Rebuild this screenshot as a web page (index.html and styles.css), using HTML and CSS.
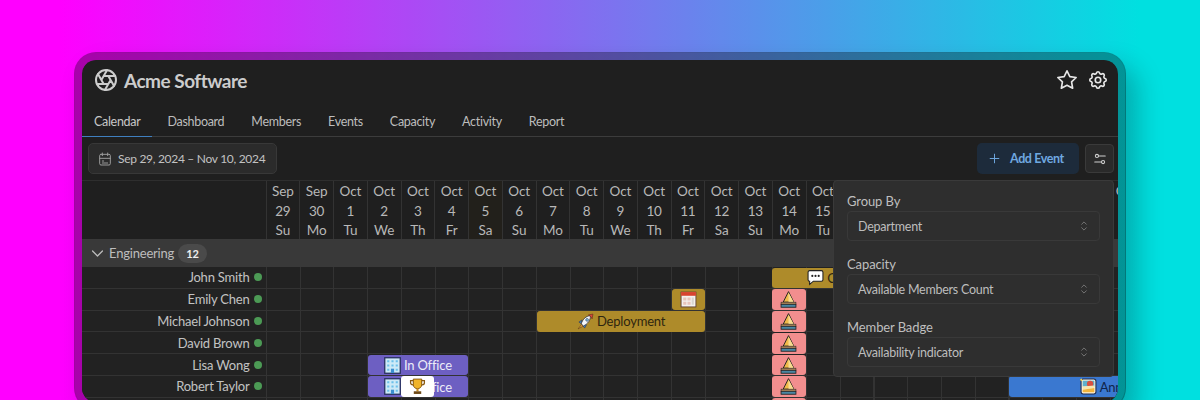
FILE: index.html
```html
<!DOCTYPE html>
<html lang="en">
<head>
<meta charset="utf-8">
<title>Acme Software</title>
<link rel="stylesheet" href="styles.css">
</head>
<body>
<svg class="defs" width="0" height="0" aria-hidden="true">
  <symbol id="e-office" viewBox="0 0 16 16">
    <rect x="0.7" y="0.7" width="14.6" height="14.6" fill="#cdeaf7" stroke="#27305f" stroke-width="1.2"/>
    <path d="M3 3h2v2H3zM7 3h2v2H7zM11 3h2v2h-2zM3 7h2v2H3zM7 7h2v2H7zM11 7h2v2h-2zM3 11h2v2H3zM11 11h2v2h-2z" fill="#6cc0ea"/>
    <rect x="6.5" y="11" width="3" height="4" fill="#3a8fd0"/>
  </symbol>
  <symbol id="e-trophy" viewBox="0 0 16 16">
    <path d="M1.5 2.5h3v4H3.5A2 2 0 0 1 1.5 4.500zM14.500 2.500h-3v4h1a2 2 0 0 0 2-2z" fill="none" stroke="#8a5a12" stroke-width="1.200"/>
    <path d="M4 1h8v5c0 2.600-1.800 4-4 4s-4-1.400-4-4z" fill="#f0b429" stroke="#7a4f10" stroke-width=".8"/>
    <rect x="7" y="10" width="2" height="2.500" fill="#c98a1c"/>
    <rect x="4.500" y="12.500" width="7" height="2.500" fill="#6e4a18"/>
  </symbol>
  <symbol id="e-rocket" viewBox="0 0 16 16">
    <path d="M4.500 10.500L1 15l5-2.800z" fill="#e8a23a" stroke="#5a3418" stroke-width=".5"/>
    <path d="M4.800 6.500L1.800 8.500l2.400 1.800zM9 11l-1.800 3.200L5.500 11.500z" fill="#3f86c8" stroke="#24324f" stroke-width=".5"/>
    <path d="M4 10.200C5.200 6 8.500 2.800 12.500 2.500c.6 4.300-2.400 7.600-6.400 9.700z" fill="#f4f7fa" stroke="#2a2a33" stroke-width=".7"/>
    <path d="M10.800 1.800L15 1l-.8 4.500c-.5-1.600-1.700-2.900-3.400-3.700z" fill="#d9493a" stroke="#5a2018" stroke-width=".5"/>
    <circle cx="9.500" cy="6.500" r="1.300" fill="#7fc4ee" stroke="#2a2a33" stroke-width=".5"/>
  </symbol>
  <symbol id="e-calendar" viewBox="0 0 16 16">
    <rect x="1" y="1" width="14" height="14" fill="#f4f1ee" stroke="#5a3a34" stroke-width=".8"/>
    <rect x="1" y="1" width="14" height="3.500" fill="#d8432f"/>
    <path d="M3 6h3v3H3zM7 6h3v3H7zM3 10h3v3H3zM7 10h3v3H7z" fill="#e8c4bb"/>
    <path d="M11 6h2v7h-2z" fill="#d9d4cf"/>
  </symbol>
  <symbol id="e-speech" viewBox="0 0 16 16">
    <path d="M2.500 1.500h11a1.500 1.500 0 0 1 1.500 1.500v7a1.500 1.500 0 0 1-1.500 1.500H6L2.500 14.500v-3A1.500 1.500 0 0 1 1 10V3a1.500 1.500 0 0 1 1.500-1.500z" fill="#fff" stroke="#222" stroke-width="1"/>
    <circle cx="5" cy="6.500" r="1" fill="#222"/><circle cx="8" cy="6.500" r="1" fill="#222"/><circle cx="11" cy="6.500" r="1" fill="#222"/>
  </symbol>
  <symbol id="e-sail" viewBox="0 0 16 16">
    <path d="M8 .6L13 10.500H3z" fill="#f0bb4a" stroke="#222" stroke-width=".9" stroke-linejoin="round"/>
    <path d="M8 1.500V10.500H13z" fill="#f8dc90"/>
    <rect x="1" y="10.500" width="14" height="2" fill="#b58a5c" stroke="#222" stroke-width=".5"/>
    <rect x="1" y="12.500" width="14" height="2.800" fill="#4a87a3" stroke="#222" stroke-width=".8"/>
  </symbol>
  <symbol id="e-sunset" viewBox="0 0 16 16">
    <rect x="1" y="1" width="14" height="14" rx="2" fill="#fbf3e0" stroke="#1f2a4a" stroke-width="1"/>
    <rect x="2.500" y="2.500" width="11" height="5.500" fill="#5fb0cc"/>
    <circle cx="9.500" cy="5.500" r="3" fill="#d9503f"/>
    <path d="M2.500 8l11-1v2.500l-11 1.500z" fill="#f8e6b0"/>
    <path d="M2.500 11l11-1.500v4h-11z" fill="#f2b53c"/>
    <path d="M0 1.500l1.500-1 1 1.500-1.500 1z" fill="#f2d24e"/>
  </symbol>
</svg>

<main class="window">
  <header class="topbar">
    <div class="brand">
      <svg class="logo" viewBox="0 0 24 24" fill="none" stroke="currentColor" stroke-width="2" stroke-linecap="round" stroke-linejoin="round"><circle cx="12" cy="12" r="10"/><path d="m14.310 8 5.740 9.940M9.690 8h11.480M7.380 12l5.740-9.940M9.690 16 3.950 6.060M14.310 16H2.830M16.620 12l-5.740 9.940"/></svg>
      <h1 class="title">Acme Software</h1>
    </div>
    <div class="top-actions">
      <svg class="icon-lg" viewBox="0 0 24 24" fill="none" stroke="currentColor" stroke-width="1.800" stroke-linejoin="round"><path d="M12 17.750l-6.172 3.245l1.179-6.873l-5-4.867l6.900-1l3.086-6.253l3.086 6.253l6.900 1l-5 4.867l1.179 6.873z"/></svg>
      <svg class="icon-lg" viewBox="0 0 24 24" fill="none" stroke="currentColor" stroke-width="1.800" stroke-linejoin="round"><path d="M10.325 4.317c.426-1.756 2.924-1.756 3.350 0a1.724 1.724 0 0 0 2.573 1.066c1.543-.94 3.310.826 2.370 2.370a1.724 1.724 0 0 0 1.065 2.572c1.756.426 1.756 2.924 0 3.350a1.724 1.724 0 0 0-1.066 2.573c.94 1.543-.826 3.310-2.370 2.370a1.724 1.724 0 0 0-2.572 1.065c-.426 1.756-2.924 1.756-3.350 0a1.724 1.724 0 0 0-2.573-1.066c-1.543.94-3.310-.826-2.370-2.370a1.724 1.724 0 0 0-1.065-2.572c-1.756-.426-1.756-2.924 0-3.350a1.724 1.724 0 0 0 1.066-2.573c-.94-1.543.826-3.310 2.370-2.370c1 .608 2.296.07 2.572-1.065z"/><circle cx="12" cy="12" r="3"/></svg>
    </div>
  </header>

  <nav class="tabs">
    <a class="tab active">Calendar</a>
    <a class="tab">Dashboard</a>
    <a class="tab">Members</a>
    <a class="tab">Events</a>
    <a class="tab">Capacity</a>
    <a class="tab">Activity</a>
    <a class="tab">Report</a>
  </nav>

  <div class="toolbar">
    <button class="date-btn">
      <svg class="icon-sm" viewBox="0 0 24 24" fill="none" stroke="currentColor" stroke-width="1.500" stroke-linecap="round" stroke-linejoin="round"><rect x="4" y="5" width="16" height="16" rx="2"/><path d="M16 3v4M8 3v4M4 11h16M8 15h2M8 18h8"/></svg>
      <span>Sep 29, 2024 – Nov 10, 2024</span>
    </button>
    <div class="tool-right">
      <button class="add-btn">
        <svg class="icon-plus" viewBox="0 0 24 24" fill="none" stroke="currentColor" stroke-width="1.800" stroke-linecap="round"><path d="M12 4v16M4 12h16"/></svg>
        <span>Add Event</span>
      </button>
      <button class="adj-btn">
        <svg class="icon-adj" viewBox="0 0 16 16" fill="none" stroke="currentColor" stroke-width="1.200" stroke-linecap="round"><circle cx="4.500" cy="4.500" r="1.800"/><path d="M6.300 4.500H14M2 11.500h7.700"/><circle cx="11.500" cy="11.500" r="1.800"/></svg>
      </button>
    </div>
  </div>

  <section class="timeline">
    <div class="corner"></div>
    <div class="day"><span>Sep</span><span>29</span><span>Su</span></div>
    <div class="day"><span>Sep</span><span>30</span><span>Mo</span></div>
    <div class="day"><span>Oct</span><span>1</span><span>Tu</span></div>
    <div class="day"><span>Oct</span><span>2</span><span>We</span></div>
    <div class="day"><span>Oct</span><span>3</span><span>Th</span></div>
    <div class="day"><span>Oct</span><span>4</span><span>Fr</span></div>
    <div class="day weekend"><span>Oct</span><span>5</span><span>Sa</span></div>
    <div class="day"><span>Oct</span><span>6</span><span>Su</span></div>
    <div class="day"><span>Oct</span><span>7</span><span>Mo</span></div>
    <div class="day"><span>Oct</span><span>8</span><span>Tu</span></div>
    <div class="day"><span>Oct</span><span>9</span><span>We</span></div>
    <div class="day"><span>Oct</span><span>10</span><span>Th</span></div>
    <div class="day"><span>Oct</span><span>11</span><span>Fr</span></div>
    <div class="day"><span>Oct</span><span>12</span><span>Sa</span></div>
    <div class="day"><span>Oct</span><span>13</span><span>Su</span></div>
    <div class="day"><span>Oct</span><span>14</span><span>Mo</span></div>
    <div class="day"><span>Oct</span><span>15</span><span>Tu</span></div>
    <div class="day"><span>Oct</span><span>16</span><span>We</span></div>
    <div class="day"><span>Oct</span><span>17</span><span>Th</span></div>
    <div class="day"><span>Oct</span><span>18</span><span>Fr</span></div>
    <div class="day"><span>Oct</span><span>19</span><span>Sa</span></div>
    <div class="day"><span>Oct</span><span>20</span><span>Su</span></div>
    <div class="day"><span>Oct</span><span>21</span><span>Mo</span></div>
    <div class="day"><span>Oct</span><span>22</span><span>Tu</span></div>
    <div class="day"><span>Oct</span><span>23</span><span>We</span></div>
    <div class="day"><span>Oct</span><span>24</span><span>Th</span></div>

    <div class="group">
      <svg class="chev" viewBox="0 0 24 24" fill="none" stroke="currentColor" stroke-width="1.800" stroke-linecap="round" stroke-linejoin="round"><path d="M5 8.500l7 7l7-7"/></svg>
      <span>Engineering</span>
      <span class="badge">12</span>
    </div>

    <div class="lines"></div>
    <div class="weekend-col"></div>

    <div class="name r1">John Smith<i class="dot"></i></div>
    <div class="name r2">Emily Chen<i class="dot"></i></div>
    <div class="name r3">Michael Johnson<i class="dot"></i></div>
    <div class="name r4">David Brown<i class="dot"></i></div>
    <div class="name r5">Lisa Wong<i class="dot"></i></div>
    <div class="name r6">Robert Taylor<i class="dot"></i></div>
    <div class="name r7">Sarah Davis<i class="dot"></i></div>

    <div class="ev gold meeting r1 c15 s6"><svg class="emoji"><use href="#e-speech"/></svg><span>Company Meeting</span></div>
    <div class="ev gold r2 c12 s1"><svg class="emoji"><use href="#e-calendar"/></svg></div>
    <div class="ev gold r3 c8 s5"><svg class="emoji"><use href="#e-rocket"/></svg><span>Deployment</span></div>
    <div class="ev pink r2 c15 s1"><svg class="emoji"><use href="#e-sail"/></svg></div>
    <div class="ev pink r3 c15 s1"><svg class="emoji"><use href="#e-sail"/></svg></div>
    <div class="ev pink r4 c15 s1"><svg class="emoji"><use href="#e-sail"/></svg></div>
    <div class="ev pink r5 c15 s1"><svg class="emoji"><use href="#e-sail"/></svg></div>
    <div class="ev pink r6 c15 s1"><svg class="emoji"><use href="#e-sail"/></svg></div>
    <div class="ev pink r7 c15 s1"><svg class="emoji"><use href="#e-sail"/></svg></div>
    <div class="ev violet r5 c3 s3"><svg class="emoji"><use href="#e-office"/></svg><span>In Office</span></div>
    <div class="ev violet r6 c3 s3"><svg class="emoji"><use href="#e-office"/></svg><span>In Office</span></div>
    <div class="ev white r6 c4 s1"><svg class="emoji"><use href="#e-trophy"/></svg></div>
    <div class="ev blue r6 c22 s7"><svg class="emoji"><use href="#e-sunset"/></svg><span>Annual Leave</span></div>
  </section>

  <aside class="panel">
    <div class="field">
      <label class="field-label">Group By</label>
      <div class="select"><span>Department</span><svg class="sel-ic" viewBox="0 0 24 24" fill="none" stroke="currentColor" stroke-width="1.500" stroke-linecap="round" stroke-linejoin="round"><path d="M8 9l4-4l4 4M16 15l-4 4l-4-4"/></svg></div>
    </div>
    <div class="field">
      <label class="field-label">Capacity</label>
      <div class="select"><span>Available Members Count</span><svg class="sel-ic" viewBox="0 0 24 24" fill="none" stroke="currentColor" stroke-width="1.500" stroke-linecap="round" stroke-linejoin="round"><path d="M8 9l4-4l4 4M16 15l-4 4l-4-4"/></svg></div>
    </div>
    <div class="field">
      <label class="field-label">Member Badge</label>
      <div class="select"><span>Availability indicator</span><svg class="sel-ic" viewBox="0 0 24 24" fill="none" stroke="currentColor" stroke-width="1.500" stroke-linecap="round" stroke-linejoin="round"><path d="M8 9l4-4l4 4M16 15l-4 4l-4-4"/></svg></div>
    </div>
  </aside>
</main>
</body>
</html>
```

FILE: styles.css
```css
* { box-sizing: border-box; }
html, body { margin: 0; height: 400px; overflow: hidden; }
body {
  background: linear-gradient(90deg, #ff00ff 5%, #00e0e0 95%);
  font-family: "Lato", "Liberation Sans", sans-serif;
  padding: 52px 74px 0;
}
.defs { position: absolute; }
.window {
  position: relative;
  width: 1052px;
  height: 358px;
  border: 8px solid rgba(0, 0, 0, .33);
  border-radius: 22px;
  background: #1f1f1f;
  background-clip: padding-box;
  box-shadow: 12px 14px 26px rgba(0, 0, 0, .22);
  overflow: hidden;
  color: #c9c9c9;
}
.topbar {
  height: 45px;
  display: flex;
  align-items: center;
  justify-content: space-between;
  padding: 0 9px 5px 12px;
}
.brand { display: flex; align-items: center; gap: 6px; color: #cccccc; }
.logo { width: 24px; height: 24px; }
.title { margin: 0; font-size: 19px; font-weight: 700; letter-spacing: -.5px; }
.top-actions { display: flex; gap: 9px; color: #e6e6e6; }
.icon-lg { width: 22px; height: 22px; }

.tabs {
  height: 32px;
  display: flex;
  gap: 3px;
  border-bottom: 1px solid #3c3c3c;
  font-size: 12.5px;
  letter-spacing: -.3px;
}
.tab {
  padding: 2px 12px 0;
  display: flex;
  align-items: center;
  color: #bdbdbd;
  margin-bottom: -1px;
  border-bottom: 1px solid transparent;
}
.tab.active { border-bottom-color: #3f7fbf; color: #c8c8c8; }

.toolbar {
  height: 43px;
  display: flex;
  align-items: center;
  justify-content: space-between;
  padding: 0 4px 0 6px;
}
button { font: inherit; cursor: pointer; }
.date-btn {
  height: 31px;
  width: 189px;
  display: flex;
  align-items: center;
  gap: 5px;
  padding: 0 8px;
  background: #2b2b2b;
  border: 1px solid #383838;
  border-radius: 5px;
  color: #c2c2c2;
  font-size: 12px;
  letter-spacing: -.3px;
  white-space: nowrap;
}
.icon-sm { width: 16px; height: 16px; color: #9a9a9a; flex: none; }
.tool-right { display: flex; align-items: center; gap: 6px; }
.add-btn {
  height: 31px;
  width: 102px;
  display: flex;
  align-items: center;
  gap: 9px;
  padding: 0 0 0 11px;
  background: #1d2b3b;
  border: 0;
  border-radius: 5px;
  color: #6fa8e0;
  font-size: 12.5px;
  font-weight: 700;
  letter-spacing: -.4px;
}
.icon-plus { width: 13px; height: 13px; }
.adj-btn {
  width: 29px;
  height: 29px;
  padding: 0;
  display: flex;
  align-items: center;
  justify-content: center;
  background: #2a2a2a;
  border: 1px solid #3a3a3a;
  border-radius: 4px;
  color: #cfcfcf;
}
.icon-adj { width: 14px; height: 14px; }

.timeline {
  display: grid;
  grid-template-columns: 183.5px repeat(32, 33.75px);
  grid-template-rows: 58px 28px repeat(7, 21.8px);
  border-top: 1px solid #2e2e2e;
  font-size: 13px;
  letter-spacing: -.2px;
}
.corner { grid-column: 1; grid-row: 1; }
.day {
  display: flex;
  flex-direction: column;
  align-items: center;
  padding-top: 1px;
  border-left: 1px solid #333;
  color: #b8b8b8;
  font-size: 13.5px;
  letter-spacing: -.1px;
  line-height: 19.5px;
}
.day.weekend { background: #22201b; }
.group {
  grid-column: 1 / -1;
  grid-row: 2;
  background: #393939;
  display: flex;
  align-items: center;
  padding-left: 7px;
  gap: 3px;
  color: #bdbdbd;
}
.chev { width: 17px; height: 17px; }
.badge {
  margin-left: 1px;
  background: #4a4a4a;
  border-radius: 10px;
  color: #eee;
  font-size: 11px;
  font-weight: 700;
  letter-spacing: 0;
  width: 29px;
  height: 19px;
  line-height: 19px;
  text-align: center;
}
.lines {
  grid-column: 2 / -1;
  grid-row: 3 / -1;
  background:
    repeating-linear-gradient(90deg, #333 0 1px, transparent 1px 33.75px),
    #222;
}
.weekend-col {
  grid-column: 8;
  grid-row: 3 / -1;
  background: rgba(90, 70, 30, .1);
}
.name {
  grid-column: 1;
  display: flex;
  align-items: center;
  justify-content: flex-end;
  gap: 4px;
  padding-right: 4px;
  color: #c2c2c2;
  background: #222;
  white-space: nowrap;
}
.lines, .name { position: relative; }
.name { border-bottom: 1px solid #333; }
.lines::after {
  content: "";
  position: absolute;
  inset: 0;
  background: repeating-linear-gradient(180deg, transparent 0 20.8px, #333 20.8px 21.8px);
}
.dot { width: 8px; height: 8px; border-radius: 50%; background: #4c9a55; flex: none; }
.r1 { grid-row: 3; } .r2 { grid-row: 4; } .r3 { grid-row: 5; } .r4 { grid-row: 6; }
.r5 { grid-row: 7; } .r6 { grid-row: 8; } .r7 { grid-row: 9; }
.ev {
  z-index: 1;
  margin: .5px 0;
  border-radius: 3px;
  display: flex;
  align-items: center;
  justify-content: center;
  gap: 3px;
  white-space: nowrap;
  overflow: hidden;
}
.c3 { grid-column-start: 5; } .c4 { grid-column-start: 6; }
.c8 { grid-column-start: 10; } .c12 { grid-column-start: 14; }
.c15 { grid-column-start: 17; } .c22 { grid-column-start: 24; }
.s1 { grid-column-end: span 1; } .s3 { grid-column-end: span 3; }
.s5 { grid-column-end: span 5; } .s6 { grid-column-end: span 6; }
.s7 { grid-column-end: span 7; }
.emoji { width: 17px; height: 17px; flex: none; }
.gold { background: #ae8b2a; color: #2e2610; margin-left: 1.5px; margin-right: -1px; }
.gold.meeting { margin-left: 0; margin-right: 10px; }
.pink { background: #f28e8e; }
.violet { background: #6d5fc2; color: #ececf8; margin-left: 1px; }
.white { background: #fff; z-index: 2; }
.blue { background: #3a78d0; color: #10254a; margin-left: 1px; }

.panel {
  position: absolute;
  top: 120px;
  left: 751px;
  width: 281px;
  height: 197px;
  z-index: 5;
  background: #2e2e2e;
  border: 1px solid #3a3a3a;
  border-radius: 4px;
  padding: 11px 13px 0;
  display: flex;
  flex-direction: column;
  gap: 14px;
}
.field-label { display: block; font-size: 13px; line-height: 19px; color: #bfbfbf; letter-spacing: -.1px; }
.select {
  height: 30px;
  display: flex;
  align-items: center;
  justify-content: space-between;
  padding: 0 8px 0 10px;
  border: 1px solid #393939;
  border-radius: 4px;
  font-size: 12.5px;
  letter-spacing: -.25px;
  color: #bdbdbd;
}
.sel-ic { width: 14px; height: 14px; color: #7e7e7e; }
```
